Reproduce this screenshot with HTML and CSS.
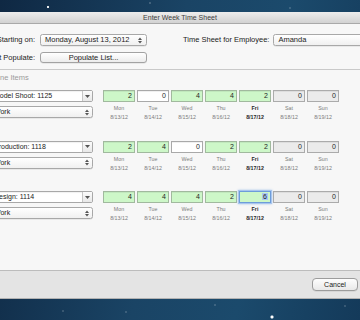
FILE: index.html
```html
<!DOCTYPE html>
<html>
<head>
<meta charset="utf-8">
<title>Enter Week Time Sheet</title>
<link rel="stylesheet" href="styles.css">
</head>
<body>
<div class="window">
  <div class="titlebar">Enter Week Time Sheet</div>
  <div class="content">
    <div class="header">
      <div class="form-grid">
        <span class="lbl">Week Starting on:</span>
        <div class="popup date-popup"><span>Monday, August 13, 2012</span><svg class="updown" width="4" height="7" viewBox="0 0 4 7"><path d="M0 3 L2 0.5 L4 3Z M0 4 L2 6.5 L4 4Z" fill="#555"/></svg></div>
        <span class="lbl">Smart Populate:</span>
        <button class="btn populate">Populate List...</button>
      </div>
      <div class="employee">
        <span class="lbl">Time Sheet for Employee:</span>
        <div class="popup emp-popup"><span>Amanda</span></div>
      </div>
    </div>
    <div class="sep"></div>
    <div class="section-title">Time Sheet Line Items</div>
    <div class="items">
      <div class="item">
        <div class="item-left">
          <div class="combo"><span class="combo-text">Model Shoot: 1125</span><span class="combo-btn"><svg width="5" height="3" viewBox="0 0 5 3"><path d="M0 0 L5 0 L2.5 3Z" fill="#555"/></svg></span></div>
          <div class="popup small"><span>Work</span><svg class="updown" width="4" height="7" viewBox="0 0 4 7"><path d="M0 3 L2 0.5 L4 3Z M0 4 L2 6.5 L4 4Z" fill="#555"/></svg></div>
        </div>
        <div class="days">
          <div class="day"><div class="field green">2</div><div class="dname">Mon</div><div class="ddate">8/13/12</div></div>
          <div class="day"><div class="field white">0</div><div class="dname">Tue</div><div class="ddate">8/14/12</div></div>
          <div class="day"><div class="field green">4</div><div class="dname">Wed</div><div class="ddate">8/15/12</div></div>
          <div class="day"><div class="field green">4</div><div class="dname">Thu</div><div class="ddate">8/16/12</div></div>
          <div class="day today"><div class="field green">2</div><div class="dname">Fri</div><div class="ddate">8/17/12</div></div>
          <div class="day"><div class="field gray">0</div><div class="dname">Sat</div><div class="ddate">8/18/12</div></div>
          <div class="day"><div class="field gray">0</div><div class="dname">Sun</div><div class="ddate">8/19/12</div></div>
        </div>
      </div>
      <div class="item">
        <div class="item-left">
          <div class="combo"><span class="combo-text">Production: 1118</span><span class="combo-btn"><svg width="5" height="3" viewBox="0 0 5 3"><path d="M0 0 L5 0 L2.5 3Z" fill="#555"/></svg></span></div>
          <div class="popup small"><span>Work</span><svg class="updown" width="4" height="7" viewBox="0 0 4 7"><path d="M0 3 L2 0.5 L4 3Z M0 4 L2 6.5 L4 4Z" fill="#555"/></svg></div>
        </div>
        <div class="days">
          <div class="day"><div class="field green">2</div><div class="dname">Mon</div><div class="ddate">8/13/12</div></div>
          <div class="day"><div class="field green">4</div><div class="dname">Tue</div><div class="ddate">8/14/12</div></div>
          <div class="day"><div class="field white">0</div><div class="dname">Wed</div><div class="ddate">8/15/12</div></div>
          <div class="day"><div class="field green">2</div><div class="dname">Thu</div><div class="ddate">8/16/12</div></div>
          <div class="day today"><div class="field green">2</div><div class="dname">Fri</div><div class="ddate">8/17/12</div></div>
          <div class="day"><div class="field gray">0</div><div class="dname">Sat</div><div class="ddate">8/18/12</div></div>
          <div class="day"><div class="field gray">0</div><div class="dname">Sun</div><div class="ddate">8/19/12</div></div>
        </div>
      </div>
      <div class="item">
        <div class="item-left">
          <div class="combo"><span class="combo-text">Design: 1114</span><span class="combo-btn"><svg width="5" height="3" viewBox="0 0 5 3"><path d="M0 0 L5 0 L2.5 3Z" fill="#555"/></svg></span></div>
          <div class="popup small"><span>Work</span><svg class="updown" width="4" height="7" viewBox="0 0 4 7"><path d="M0 3 L2 0.5 L4 3Z M0 4 L2 6.5 L4 4Z" fill="#555"/></svg></div>
        </div>
        <div class="days">
          <div class="day"><div class="field green">4</div><div class="dname">Mon</div><div class="ddate">8/13/12</div></div>
          <div class="day"><div class="field green">4</div><div class="dname">Tue</div><div class="ddate">8/14/12</div></div>
          <div class="day"><div class="field green">4</div><div class="dname">Wed</div><div class="ddate">8/15/12</div></div>
          <div class="day"><div class="field green">2</div><div class="dname">Thu</div><div class="ddate">8/16/12</div></div>
          <div class="day today"><div class="field green focus"><span class="sel">6</span></div><div class="dname">Fri</div><div class="ddate">8/17/12</div></div>
          <div class="day"><div class="field gray">0</div><div class="dname">Sat</div><div class="ddate">8/18/12</div></div>
          <div class="day"><div class="field gray">0</div><div class="dname">Sun</div><div class="ddate">8/19/12</div></div>
        </div>
      </div>
    </div>
  </div>
  <div class="footer"><button class="btn cancel">Cancel</button></div>
</div>
</body>
</html>
```

FILE: styles.css
```css
* { box-sizing: border-box; margin: 0; padding: 0; }
html, body { width: 360px; height: 320px; overflow: hidden; }
body {
  font-family: "Liberation Sans", Arial, sans-serif;
  font-size: 7.5px;
  color: #222;
  background:
    radial-gradient(circle at 48px 7px, #fff 0, #fff 0.6px, rgba(255,255,255,0) 1.6px),
    radial-gradient(circle at 150px 3px, rgba(255,255,255,.6) 0, rgba(255,255,255,0) 1px),
    radial-gradient(circle at 290px 8px, rgba(255,255,255,.5) 0, rgba(255,255,255,0) 1px),
    radial-gradient(circle at 272px 317px, #fff 0, #fff 0.8px, rgba(255,255,255,0) 2.2px),
    radial-gradient(circle at 63px 311px, rgba(255,255,255,.5) 0, rgba(255,255,255,0) 1px),
    radial-gradient(circle at 126px 312px, rgba(255,255,255,.5) 0, rgba(255,255,255,0) 1px),
    radial-gradient(circle at 215px 305px, rgba(255,255,255,.5) 0, rgba(255,255,255,0) 1px),
    radial-gradient(circle at 345px 306px, rgba(255,255,255,.5) 0, rgba(255,255,255,0) 1px),
    linear-gradient(100deg, #0f2843 0%, #1a4465 45%, #1b4a6c 70%, #143a5a 100%);
}

.window {
  margin-top: 12px;
  margin-left: -50px;
  width: 430px;
}

.titlebar {
  height: 12px;
  line-height: 11px;
  text-align: center;
  padding-left: 30px;
  font-size: 7px;
  color: #404040;
  background: linear-gradient(#ededed, #d2d2d2);
  border-bottom: 1px solid #a9a9a9;
}

.content {
  height: 247px;
  padding-top: 10px;
  background: #f7f7f7;
  border-bottom: 1px solid #bcbcbc;
}

.header { display: flex; align-items: flex-start; }

.form-grid {
  display: grid;
  grid-template-columns: 85px 107px;
  grid-template-rows: 12px 11px;
  column-gap: 5px;
  row-gap: 6px;
}

.lbl { line-height: 12px; text-align: right; white-space: nowrap; color: #222; }

.popup {
  height: 12px;
  display: flex;
  align-items: center;
  justify-content: space-between;
  padding: 0 4px;
  line-height: 10px;
  white-space: nowrap;
  background: linear-gradient(#ffffff, #f0f0f0);
  border: 1px solid #a8a8a8;
  border-radius: 2.5px;
  box-shadow: 0 0.5px 0.5px rgba(0,0,0,.12);
}

.updown { display: block; flex: none; }

.employee {
  margin-left: 36px;
  display: flex;
  gap: 4px;
}
.emp-popup { width: 95px; }

.btn {
  font-family: "Liberation Sans", Arial, sans-serif;
  color: #222;
  background: linear-gradient(#ffffff, #ececec);
  border: 1px solid #a2a2a2;
  border-radius: 3px;
  box-shadow: 0 0.5px 0.5px rgba(0,0,0,.12);
}
.populate { height: 11px; font-size: 7.5px; line-height: 9px; }

.sep { margin-top: 6px; height: 1px; background: #c9c9c9; }

.section-title {
  margin-top: 3px;
  line-height: 9px;
  padding-left: 4px;
  color: #9b9b9b;
}

.items {
  margin-top: 8px;
  display: flex;
  flex-direction: column;
  gap: 18.5px;
}

.item { display: flex; align-items: flex-start; }

.item-left {
  margin-left: 40px;
  width: 103px;
  display: flex;
  flex-direction: column;
  gap: 4px;
}

.combo {
  height: 12px;
  display: flex;
  background: #fff;
  border: 1px solid #a8a8a8;
  border-radius: 2px;
  box-shadow: inset 0 1px 1px rgba(0,0,0,.06);
}
.combo-text {
  flex: 1;
  padding-left: 3px;
  line-height: 10px;
  font-size: 7px;
  white-space: nowrap;
  overflow: hidden;
}
.combo-btn {
  width: 10px;
  display: flex;
  align-items: center;
  justify-content: center;
  border-left: 1px solid #c6c6c6;
  background: linear-gradient(#fbfbfb, #e8e8e8);
}
.combo-btn svg { display: block; }

.popup.small { font-size: 7px; padding-left: 3px; padding-right: 3px; }

.days { margin-left: 10px; display: flex; gap: 2px; }

.day { width: 32px; text-align: center; }

.field {
  height: 12px;
  border: 1px solid #a9a9a9;
  text-align: right;
  padding-right: 2px;
  line-height: 10px;
  font-size: 7px;
  color: #1e1e1e;
  box-shadow: inset 0 1px 0 rgba(0,0,0,.06);
}
.field.green { background: #cdf7c8; border-color: #a1b99e; }
.field.white { background: #ffffff; }
.field.gray { background: #ebebeb; border-color: #ababab; }
.field.focus {
  border-color: #6d9cda;
  box-shadow: 0 0 0 1px #a8c6ee, 0 0 2px 1px rgba(110,160,225,.6);
}
.sel { background: #a9c7f3; padding: 0 1px; }

.dname, .ddate {
  line-height: 9px;
  font-size: 5.3px;
  color: #7c7c7c;
}
.dname { margin-top: 2px; }
.today .dname, .today .ddate { color: #262626; font-weight: bold; }

.footer {
  height: 28px;
  display: flex;
  justify-content: flex-end;
  align-items: flex-start;
  padding-top: 7px;
  padding-right: 22px;
  background: #e4e4e4;
  border-bottom: 1px solid #b2b2b2;
}
.cancel {
  width: 46px;
  height: 13px;
  font-size: 7px;
  line-height: 11px;
  border-color: #9c9c9c;
  border-radius: 4px;
  background: linear-gradient(#fdfdfd, #e9e9e9);
}
```
